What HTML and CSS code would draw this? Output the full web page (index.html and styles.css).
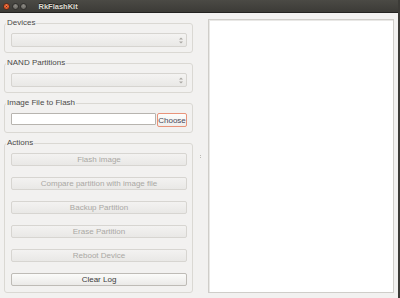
FILE: index.html
```html
<!DOCTYPE html>
<html lang="en">
<head>
  <meta charset="UTF-8" />
  <title>RkFlashKit</title>
  <link rel="stylesheet" href="styles.css">
</head>
<body>
  <div class="window">
    <!-- Title bar -->
    <div class="titlebar">
      <div class="wbuttons">
        <span class="wbtn close">
          <svg width="8" height="8" viewBox="0 0 8 8"><path d="M2.7 2.7 L5.3 5.3 M5.3 2.7 L2.7 5.3" stroke="#3a2a22" stroke-width="1"/></svg>
        </span>
        <span class="wbtn"></span>
        <span class="wbtn"></span>
      </div>
      <span class="title">RkFlashKit</span>
    </div>

    <div class="main">
      <div class="controls">
        <fieldset class="group">
          <legend>Devices</legend>
          <div class="combo">
            <svg class="spin" width="4" height="7" viewBox="0 0 4 7"><path d="M0 2.5 L2 0.5 L4 2.5 Z M0 4.5 L2 6.5 L4 4.5 Z" fill="#a9a6a2"/></svg>
          </div>
        </fieldset>

        <fieldset class="group">
          <legend>NAND Partitions</legend>
          <div class="combo">
            <svg class="spin" width="4" height="7" viewBox="0 0 4 7"><path d="M0 2.5 L2 0.5 L4 2.5 Z M0 4.5 L2 6.5 L4 4.5 Z" fill="#a9a6a2"/></svg>
          </div>
        </fieldset>

        <fieldset class="group">
          <legend>Image File to Flash</legend>
          <div class="file-row">
            <input type="text" class="file-input">
            <button class="btn choose">Choose</button>
          </div>
        </fieldset>

        <fieldset class="group actions">
          <legend>Actions</legend>
          <button class="btn" disabled>Flash image</button>
          <button class="btn" disabled>Compare partition with image file</button>
          <button class="btn" disabled>Backup Partition</button>
          <button class="btn" disabled>Erase Partition</button>
          <button class="btn" disabled>Reboot Device</button>
          <button class="btn">Clear Log</button>
        </fieldset>
      </div>

      <div class="splitter">
        <span class="dot"></span>
        <span class="dot"></span>
      </div>

      <div class="log"></div>
    </div>
  </div>
</body>
</html>
```

FILE: styles.css
```css
* {
  margin: 0;
  padding: 0;
  box-sizing: border-box;
  font-family: 'Liberation Sans', Arial, sans-serif;
}

body {
  width: 400px;
  height: 298px;
  background: #3c3b37;
  overflow: hidden;
}

.window {
  width: 398px;
  height: 298px;
  background: #f2f1f0;
  display: flex;
  flex-direction: column;
}

/* Title bar */
.titlebar {
  height: 13px;
  background: linear-gradient(#4b4a45, #3c3b37);
  border-bottom: 1px solid #232220;
  display: flex;
  align-items: center;
  padding-left: 3px;
}

.wbuttons {
  display: flex;
  gap: 1px;
}

.wbtn {
  width: 7px;
  height: 7px;
  border-radius: 50%;
  background: radial-gradient(circle at 50% 35%, #8d8b85, #5c5b56);
  border: 1px solid #2f2e2b;
  margin-right: 0.5px;
  display: flex;
  align-items: center;
  justify-content: center;
}

.wbtn svg {
  width: 7px;
  height: 7px;
}

.wbtn.close {
  background: radial-gradient(circle at 50% 35%, #f7794a, #df4a16);
  border-color: #5a2a17;
}

.title {
  margin-left: 11px;
  font-size: 7.5px;
  font-weight: bold;
  color: #dfdbd2;
  text-shadow: 0 -1px 0 #1e1d1b;
}

/* Main area */
.main {
  flex: 1;
  display: flex;
  padding: 6px 4px 5px 4px;
}

.controls {
  width: 189px;
  display: flex;
  flex-direction: column;
  gap: 6px;
}

.group {
  border: 1px solid #dad8d3;
  border-radius: 3px;
  padding: 6px 5px 5px 6px;
  min-width: 0;
}

.group legend {
  font-size: 8px;
  line-height: 8px;
  color: #4a4a48;
  margin-left: -5px;
  padding: 0 1px;
}

.combo {
  height: 14px;
  border: 1px solid #d6d4d0;
  border-radius: 2px;
  background: linear-gradient(#f4f3f2, #e9e8e6);
  display: flex;
  align-items: center;
  justify-content: flex-end;
  padding-right: 3px;
}

.file-row {
  display: flex;
  align-items: flex-start;
  gap: 1px;
}

.file-input {
  flex: 1;
  width: 0;
  min-width: 0;
  height: 12px;
  border: 1px solid #b7b4af;
  border-radius: 1px;
  background: #ffffff;
  outline: none;
}

.btn {
  height: 13px;
  width: 100%;
  font-size: 8px;
  border: 1px solid #bebbb6;
  border-radius: 2px;
  background: linear-gradient(#fbfbfa, #ebeae8);
  color: #3c3c3c;
}

.btn:disabled {
  border-color: #d7d5d1;
  background: linear-gradient(#f3f2f1, #e9e8e6);
  color: #aaa8a4;
}

.btn.choose {
  flex: none;
  width: 30px;
  height: 14px;
  border-color: #e8937a;
  background: linear-gradient(#fdfdfc, #efeeec);
  color: #46475a;
}

.actions {
  flex: 1;
  display: flex;
  flex-direction: column;
  gap: 11px;
}

/* Splitter */
.splitter {
  width: 15px;
  display: flex;
  flex-direction: column;
  align-items: center;
  justify-content: center;
  gap: 1px;
}

.dot {
  width: 1px;
  height: 1px;
  background: #bcbab5;
}

/* Log */
.log {
  flex: 1;
  background: #ffffff;
  border: 1px solid #cfcdc9;
  box-shadow: inset 1px 1px 0 #e9e8e6;
}
```
